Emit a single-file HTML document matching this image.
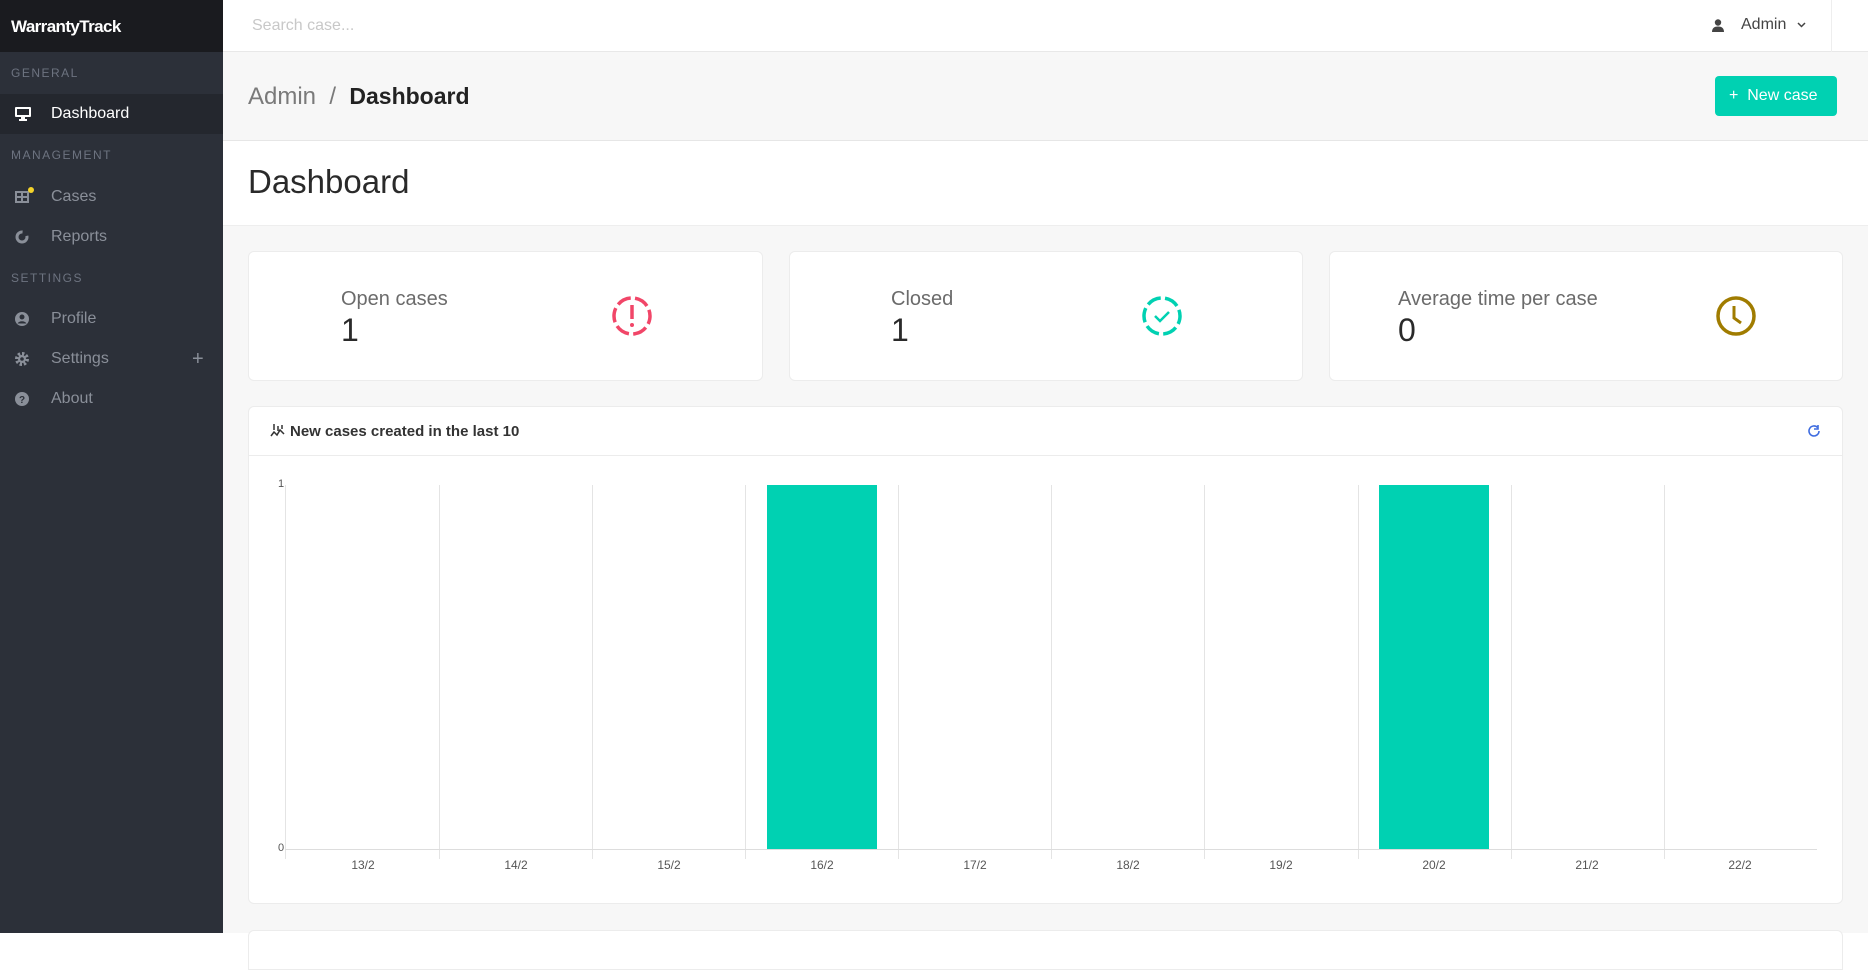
<!DOCTYPE html>
<html><head><meta charset="utf-8"><style>
*{box-sizing:border-box;margin:0;padding:0}
body{width:1868px;height:940px;overflow:hidden;background:#fff;font-family:"Liberation Sans",sans-serif;position:relative}
.sb{position:absolute;left:0;top:0;width:223px;height:933px;background:#2c3039}
.logo{height:52px;background:#1a1b1f;color:#fff;font-weight:bold;font-size:17px;letter-spacing:-0.6px;padding:17px 0 0 11px}
.lbl{position:absolute;left:11px;font-size:12px;letter-spacing:1.5px;color:#6d7380}
.it{position:absolute;left:0;width:223px;height:40px;color:#8a8f99;font-size:16px;line-height:40px;padding-left:51px}
.it svg{position:absolute;left:15px;top:13px}
.act{background:#24272e;color:#fff}
.hdr{position:absolute;left:223px;top:0;right:0;height:52px;background:#fff;border-bottom:1px solid #e8e8e8}
.pt{position:absolute;left:223px;top:52px;right:0;height:89px;background:#f7f7f7;border-bottom:1px solid #e6e6e6}
.ht{position:absolute;left:223px;top:141px;right:0;height:85px;background:#fff;border-bottom:1px solid #eee}
.main{position:absolute;left:223px;top:226px;right:0;height:707px;background:#f7f7f7}
.card{position:absolute;background:#fff;border:1px solid #ececec;border-radius:6px}
.cl{position:absolute;font-size:20px;color:#6b6b6b}
.cv{position:absolute;font-size:32px;color:#2a2a2a}
.gl{position:absolute;top:485px;width:1px;height:374px;background:#e4e4e4}
.xl{position:absolute;top:858px;font-size:12px;color:#555;width:60px;text-align:center}
</style></head><body>
<div class="sb">
<div class="logo">WarrantyTrack</div>
<div class="lbl" style="top:66px">GENERAL</div>
<div class="it act" style="top:94px"><svg width="16" height="14" viewBox="0 0 16 14"><rect x="0" y="0" width="16" height="10" rx="1" fill="#fff"/><rect x="2" y="2" width="12" height="6" fill="#24272e"/><rect x="6" y="10" width="4" height="2" fill="#fff"/><rect x="4" y="12" width="8" height="2" fill="#fff"/></svg>Dashboard</div>
<div class="lbl" style="top:148px">MANAGEMENT</div>
<div class="it" style="top:177px"><svg width="22" height="16" viewBox="0 0 22 16" style="top:10px"><rect x="1" y="5" width="12" height="10" fill="none" stroke="#8a8f99" stroke-width="2"/><path d="M7 5v10M1 10h12" stroke="#8a8f99" stroke-width="2"/><circle cx="16" cy="3" r="3" fill="#f5d32a"/></svg>Cases</div>
<div class="it" style="top:217px"><svg width="14" height="14" viewBox="0 0 14 14"><circle cx="7" cy="7" r="5" fill="none" stroke="#8a8f99" stroke-width="3" stroke-dasharray="24 6"/></svg>Reports</div>
<div class="lbl" style="top:271px">SETTINGS</div>
<div class="it" style="top:299px"><svg width="14" height="14" viewBox="0 0 14 14"><circle cx="7" cy="7" r="7" fill="#8a8f99"/><circle cx="7" cy="5" r="2.5" fill="#2c3039"/><path d="M2.5 11.5a5 4 0 0 1 9 0" fill="#2c3039"/></svg>Profile</div>
<div class="it" style="top:339px"><svg width="14" height="14" viewBox="0 0 14 14"><circle cx="7" cy="7" r="5" fill="none" stroke="#8a8f99" stroke-width="4" stroke-dasharray="2.2 1.7"/><circle cx="7" cy="7" r="4" fill="#8a8f99"/><circle cx="7" cy="7" r="1.8" fill="#2c3039"/></svg>Settings<span style="position:absolute;left:192px;font-size:20px">+</span></div>
<div class="it" style="top:379px"><svg width="14" height="14" viewBox="0 0 14 14"><circle cx="7" cy="7" r="7" fill="#8a8f99"/><text x="7" y="11" font-size="10" font-weight="bold" text-anchor="middle" fill="#2c3039" font-family="Liberation Sans">?</text></svg>About</div>
</div>
<div class="hdr">
<div style="position:absolute;left:29px;top:17px;font-size:16px;color:#c8c8c8">Search case...</div>
<svg style="position:absolute;left:1489px;top:19px" width="12" height="13" viewBox="0 0 12 13"><circle cx="6" cy="3.5" r="3.2" fill="#444"/><path d="M0 13c0-4 2.5-5.5 6-5.5s6 1.5 6 5.5z" fill="#444"/></svg>
<div style="position:absolute;left:1518px;top:16px;font-size:16px;color:#444">Admin</div>
<svg style="position:absolute;left:1574px;top:22px" width="9" height="6" viewBox="0 0 9 6"><path d="M1 1l3.5 3.5L8 1" fill="none" stroke="#444" stroke-width="1.5"/></svg>
<div style="position:absolute;left:1608px;top:0;width:1px;height:52px;background:#eee"></div>
</div>
<div class="pt">
<div style="position:absolute;left:25px;top:31px;font-size:24px;color:#7a7a7a">Admin&nbsp;&nbsp;/&nbsp;&nbsp;<span style="color:#222;font-weight:bold;font-size:23px">Dashboard</span></div>
<div style="position:absolute;left:1492px;top:24px;width:122px;height:40px;background:#00d1b2;border-radius:4px;color:#fff;font-size:16px;line-height:40px;padding-left:14px">+&nbsp;&nbsp;New case</div>
</div>
<div class="ht"><div style="position:absolute;left:25px;top:22px;font-size:33px;color:#2a2a2a">Dashboard</div></div>
<div class="main"></div>
<div class="card" style="left:248px;top:251px;width:515px;height:130px"><div class="cl" style="left:92px;top:36px">Open cases</div><div class="cv" style="left:92px;top:60px">1</div>
<svg style="position:absolute;left:362px;top:43px" width="42" height="42" viewBox="0 0 42 42"><circle cx="21" cy="21" r="18" fill="none" stroke="#f14668" stroke-width="3.5" stroke-dasharray="14.5 4.3" transform="rotate(-80 21 21)"/><path d="M21 10v14" stroke="#f14668" stroke-width="3.5"/><circle cx="21" cy="30" r="2" fill="#f14668"/></svg></div>
<div class="card" style="left:789px;top:251px;width:514px;height:130px"><div class="cl" style="left:101px;top:36px">Closed</div><div class="cv" style="left:101px;top:60px">1</div>
<svg style="position:absolute;left:351px;top:43px" width="42" height="42" viewBox="0 0 42 42"><circle cx="21" cy="21" r="18" fill="none" stroke="#00d1b2" stroke-width="3.5" stroke-dasharray="14.5 4.3" transform="rotate(-80 21 21)"/><path d="M14 21l5 5 9-9" fill="none" stroke="#00d1b2" stroke-width="2.5"/></svg></div>
<div class="card" style="left:1329px;top:251px;width:514px;height:130px"><div class="cl" style="left:68px;top:36px">Average time per case</div><div class="cv" style="left:68px;top:60px">0</div>
<svg style="position:absolute;left:385px;top:43px" width="42" height="42" viewBox="0 0 42 42"><circle cx="21" cy="21" r="18" fill="none" stroke="#a07c00" stroke-width="3.5"/><path d="M19 11v12l7 5" fill="none" stroke="#a07c00" stroke-width="3"/></svg></div>
<div class="card" style="left:248px;top:406px;width:1595px;height:498px">
<div style="position:absolute;left:0;right:0;top:48px;height:1px;background:#ececec"></div>
<svg style="position:absolute;left:21px;top:16px" width="16" height="14" viewBox="0 0 16 14"><path d="M1 13l3-4 3 3 3-5 4 4M4 7V1M8 8V3M12 6V2" fill="none" stroke="#333" stroke-width="1.5"/></svg>
<div style="position:absolute;left:41px;top:16px;font-size:15px;font-weight:bold;color:#333">New cases created in the last 10</div>
<svg style="position:absolute;left:1558px;top:17px" width="14" height="14" viewBox="0 0 14 14"><path d="M12 7a5 5 0 1 1-1.5-3.6" fill="none" stroke="#3e6ce0" stroke-width="1.6"/><path d="M11 1v4H7" fill="none" stroke="#3e6ce0" stroke-width="1.6"/></svg>
</div>
<div class="gl" style="left:285px"></div><div class="gl" style="left:439px"></div><div class="gl" style="left:592px"></div><div class="gl" style="left:745px"></div><div class="gl" style="left:898px"></div><div class="gl" style="left:1051px"></div><div class="gl" style="left:1204px"></div><div class="gl" style="left:1358px"></div><div class="gl" style="left:1511px"></div><div class="gl" style="left:1664px"></div>
<div style="position:absolute;left:285px;top:849px;width:1532px;height:1px;background:#ddd"></div>
<div style="position:absolute;left:767px;top:485px;width:110px;height:364px;background:#00d1b2"></div>
<div style="position:absolute;left:1379px;top:485px;width:110px;height:364px;background:#00d1b2"></div>
<div style="position:absolute;left:278px;top:478px;font-size:11px;color:#555">1</div>
<div style="position:absolute;left:278px;top:842px;font-size:11px;color:#555">0</div>
<div class="xl" style="left:333px">13/2</div><div class="xl" style="left:486px">14/2</div><div class="xl" style="left:639px">15/2</div><div class="xl" style="left:792px">16/2</div><div class="xl" style="left:945px">17/2</div><div class="xl" style="left:1098px">18/2</div><div class="xl" style="left:1251px">19/2</div><div class="xl" style="left:1404px">20/2</div><div class="xl" style="left:1557px">21/2</div><div class="xl" style="left:1710px">22/2</div>
<div class="card" style="left:248px;top:930px;width:1595px;height:40px;border-radius:6px 6px 0 0"></div>
</body></html>
